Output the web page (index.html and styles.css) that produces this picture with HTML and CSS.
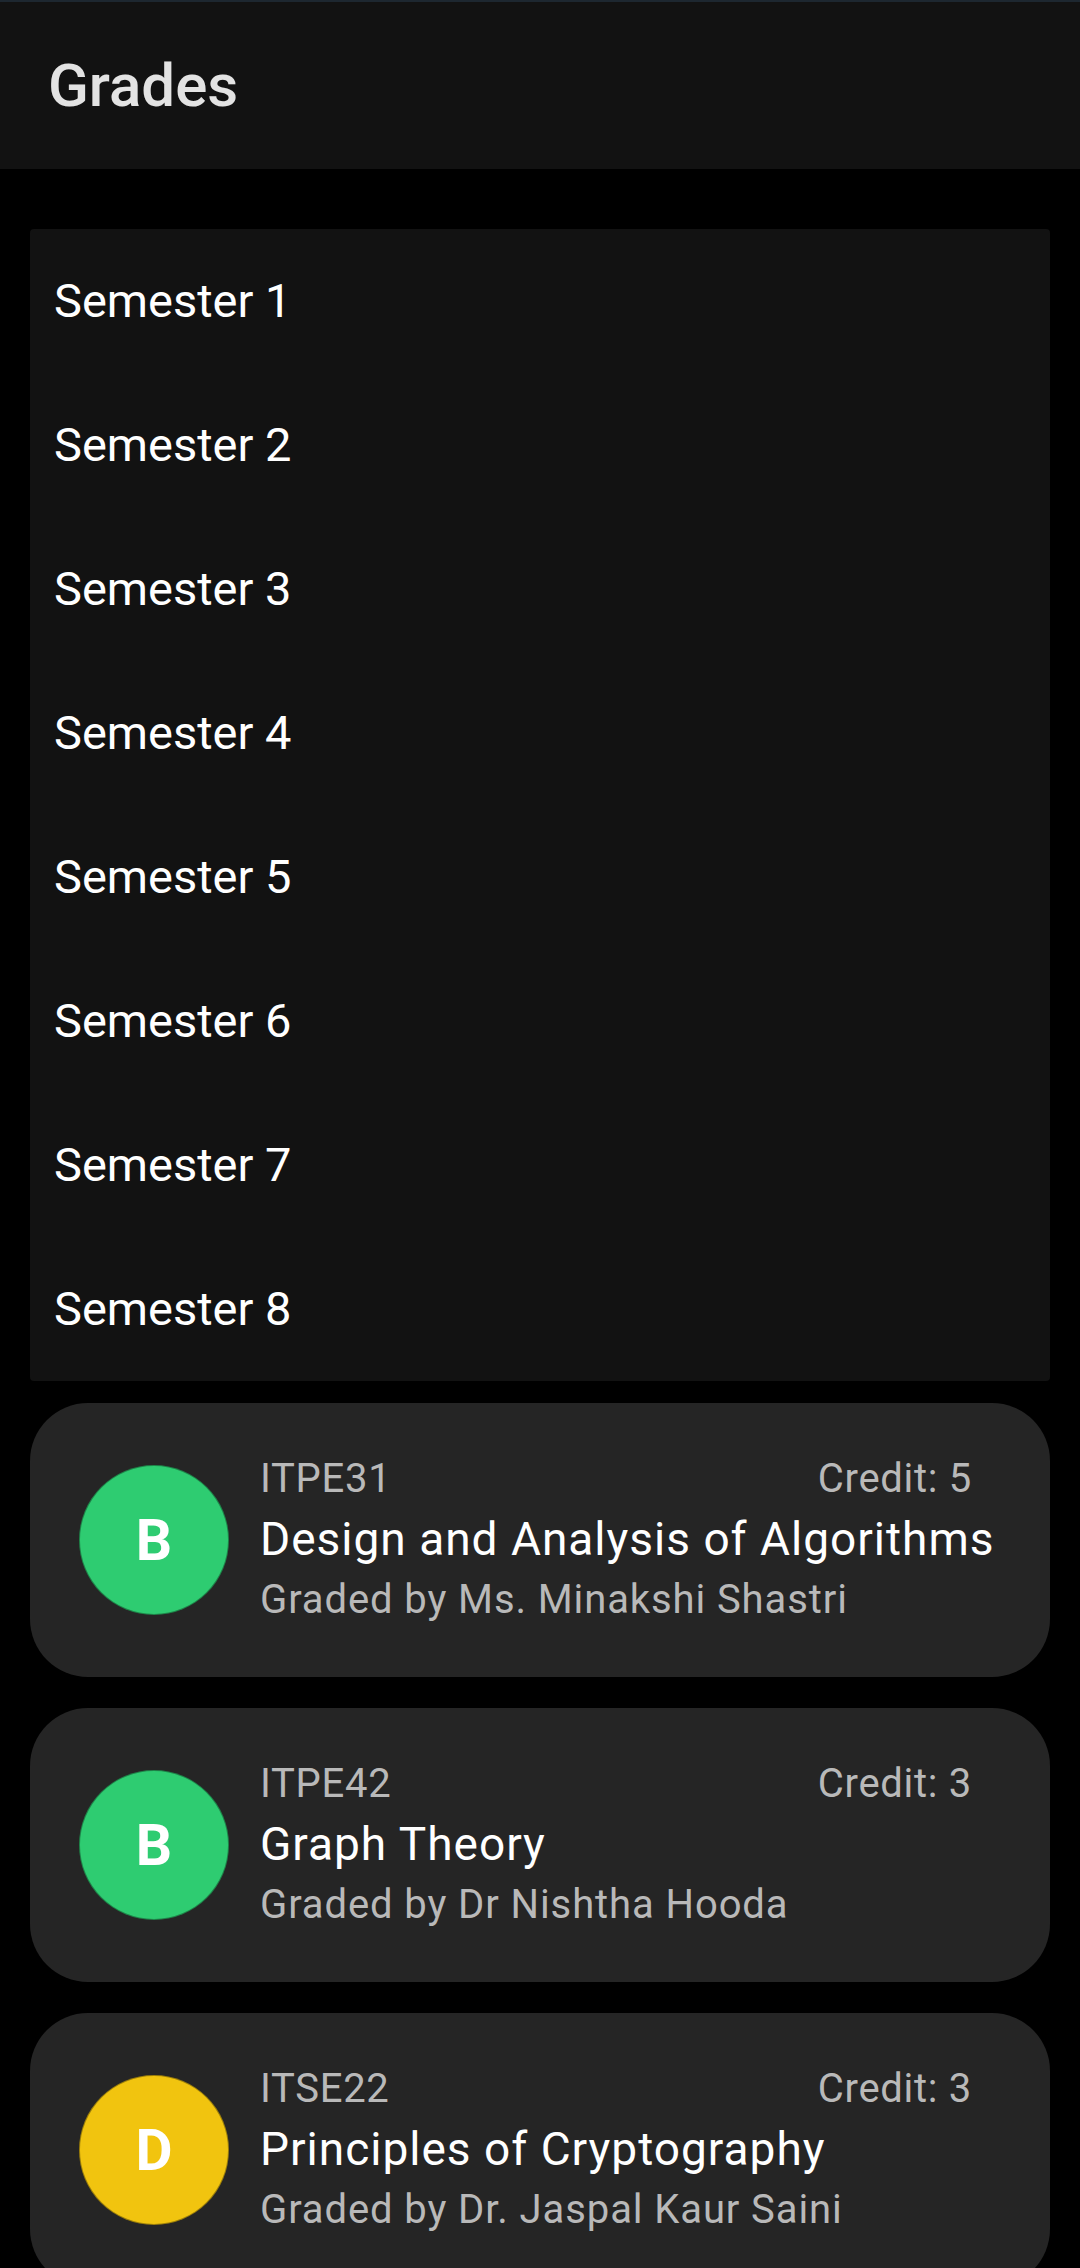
FILE: index.html
```html
<!DOCTYPE html>
<html lang="en">
<head>
<meta charset="utf-8">
<title>Grades</title>
<link rel="stylesheet" href="styles.css">
</head>
<body>
<header class="appbar">
  <h1 class="appbar-title">Grades</h1>
</header>
<main class="content">
  <ul class="semesters">
    <li class="semester">Semester 1</li>
    <li class="semester">Semester 2</li>
    <li class="semester">Semester 3</li>
    <li class="semester">Semester 4</li>
    <li class="semester">Semester 5</li>
    <li class="semester">Semester 6</li>
    <li class="semester">Semester 7</li>
    <li class="semester">Semester 8</li>
  </ul>
  <div class="grades">
    <div class="grade-card">
      <div class="grade-badge grade-green">B</div>
      <div class="grade-info">
        <div class="grade-top"><span class="code">ITPE31</span><span class="credit">Credit: 5</span></div>
        <div class="course">Design and Analysis of Algorithms</div>
        <div class="grader">Graded by Ms. Minakshi Shastri</div>
      </div>
    </div>
    <div class="grade-card">
      <div class="grade-badge grade-green">B</div>
      <div class="grade-info">
        <div class="grade-top"><span class="code">ITPE42</span><span class="credit">Credit: 3</span></div>
        <div class="course">Graph Theory</div>
        <div class="grader">Graded by Dr Nishtha Hooda</div>
      </div>
    </div>
    <div class="grade-card">
      <div class="grade-badge grade-yellow">D</div>
      <div class="grade-info">
        <div class="grade-top"><span class="code">ITSE22</span><span class="credit">Credit: 3</span></div>
        <div class="course">Principles of Cryptography</div>
        <div class="grader">Graded by Dr. Jaspal Kaur Saini</div>
      </div>
    </div>
  </div>
</main>
</body>
</html>
```
FILE: styles.css
```css
* { box-sizing: border-box; }
html, body {
  margin: 0;
  padding: 0;
  background: #000;
  font-family: Roboto, "Noto Sans", "Liberation Sans", sans-serif;
  color: #fff;
}
body { height: 2268px; overflow: hidden; }
.appbar {
  height: 169px;
  background: #121212;
  border-top: 2px solid #1d2730;
  display: flex;
  align-items: center;
  padding-left: 48px;
}
.appbar-title {
  margin: 0;
  font-size: 60px;
  font-weight: 500;
  color: #e3e3e3;
  letter-spacing: 0;
}
.content {
  padding: 60px 30px 0 30px;
  display: flex;
  flex-direction: column;
}
.semesters {
  list-style: none;
  margin: 0;
  padding: 0;
  background: #121212;
  border-radius: 4px;
}
.semester {
  height: 144px;
  line-height: 144px;
  padding-left: 24px;
  font-size: 47px;
  color: #fff;
}
.grades {
  margin-top: 22px;
  display: flex;
  flex-direction: column;
  gap: 31px;
}
.grade-card {
  height: 274px;
  background: #252525;
  border-radius: 58px;
  display: flex;
  align-items: center;
  padding: 0 78px 0 49px;
  gap: 31px;
}
.grade-badge {
  flex: 0 0 150px;
  width: 150px;
  height: 150px;
  border-radius: 50%;
  display: flex;
  align-items: center;
  justify-content: center;
  font-size: 57px;
  font-weight: 700;
  color: #fff;
  border: 1px solid rgba(0,0,0,0.35);
}
.grade-green { background: #2ecc71; }
.grade-yellow { background: #f1c40f; }
.grade-info {
  flex: 1;
  min-width: 0;
  display: flex;
  flex-direction: column;
}
.grade-top {
  display: flex;
  justify-content: space-between;
  line-height: 60px;
  font-size: 40px;
  letter-spacing: 0.7px;
  color: #b9b9b9;
}
.course {
  line-height: 60px;
  font-size: 46px;
  letter-spacing: 1px;
  white-space: nowrap;
  color: #fff;
}
.grader {
  line-height: 62px;
  font-size: 40px;
  letter-spacing: 0.9px;
  white-space: nowrap;
  color: #b9b9b9;
}
```
